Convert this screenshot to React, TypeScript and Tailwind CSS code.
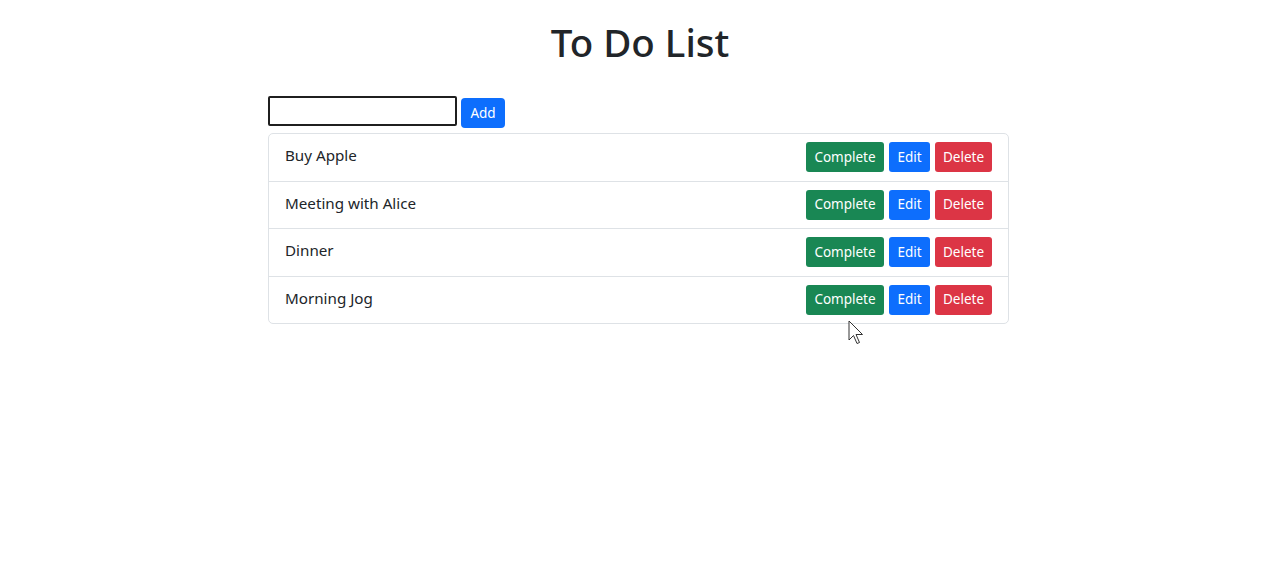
import { useState } from 'react';

const initialTodos = ['Buy Apple', 'Meeting with Alice', 'Dinner', 'Morning Jog'];

export default function App() {
  const [todos] = useState(initialTodos);
  const [text, setText] = useState('');

  return (
    <div className="relative min-h-[586px] bg-white text-[#212529] font-['Noto_Sans',sans-serif]">
      <h1 className="pt-[18px] text-center text-[38.5px] font-medium leading-[49px]">To Do List</h1>

      <div className="ml-[268px] mt-[29px] w-[741px]">
        <div className="flex items-start gap-[4px]">
          <input
            value={text}
            onChange={(e) => setText(e.target.value)}
            className="h-[30px] w-[189px] rounded-[2px] border-2 border-[#1f1f1f] bg-white px-1 outline-none"
          />
          <button className="mt-[2px] h-[30px] w-[44px] rounded-[4px] bg-[#0d6efd] text-[13.5px] text-white">
            Add
          </button>
        </div>

        <ul className="mt-[5px] rounded-[5px] border border-[#dee2e6]">
          {todos.map((todo, i) => (
            <li
              key={todo}
              className={`flex items-start justify-between pl-[16px] pr-[16px] pt-[8px] pb-[8.5px] ${
                i < todos.length - 1 ? 'border-b border-[#dee2e6]' : ''
              }`}
            >
              <span className="mt-[1px] text-[15.2px] leading-[24px]">{todo}</span>
              <div className="flex gap-[5px]">
                <button className="h-[30px] w-[78px] rounded-[3px] bg-[#198754] text-[13.5px] text-white">
                  Complete
                </button>
                <button className="h-[30px] w-[41px] rounded-[3px] bg-[#0d6efd] text-[13.5px] text-white">
                  Edit
                </button>
                <button className="h-[30px] w-[57px] rounded-[3px] bg-[#dc3545] text-[13.5px] text-white">
                  Delete
                </button>
              </div>
            </li>
          ))}
        </ul>
      </div>

      {/* mouse pointer */}
      <svg className="absolute left-[848px] top-[320px]" width="17" height="26" viewBox="0 0 17 26">
        <path
          d="M1 1 L1 20 L5.5 15.5 L9 23.5 L11.5 22.5 L8 14.5 L14.5 14.5 Z"
          fill="white"
          stroke="#333"
          strokeWidth="1"
          strokeLinejoin="round"
        />
      </svg>
    </div>
  );
}
